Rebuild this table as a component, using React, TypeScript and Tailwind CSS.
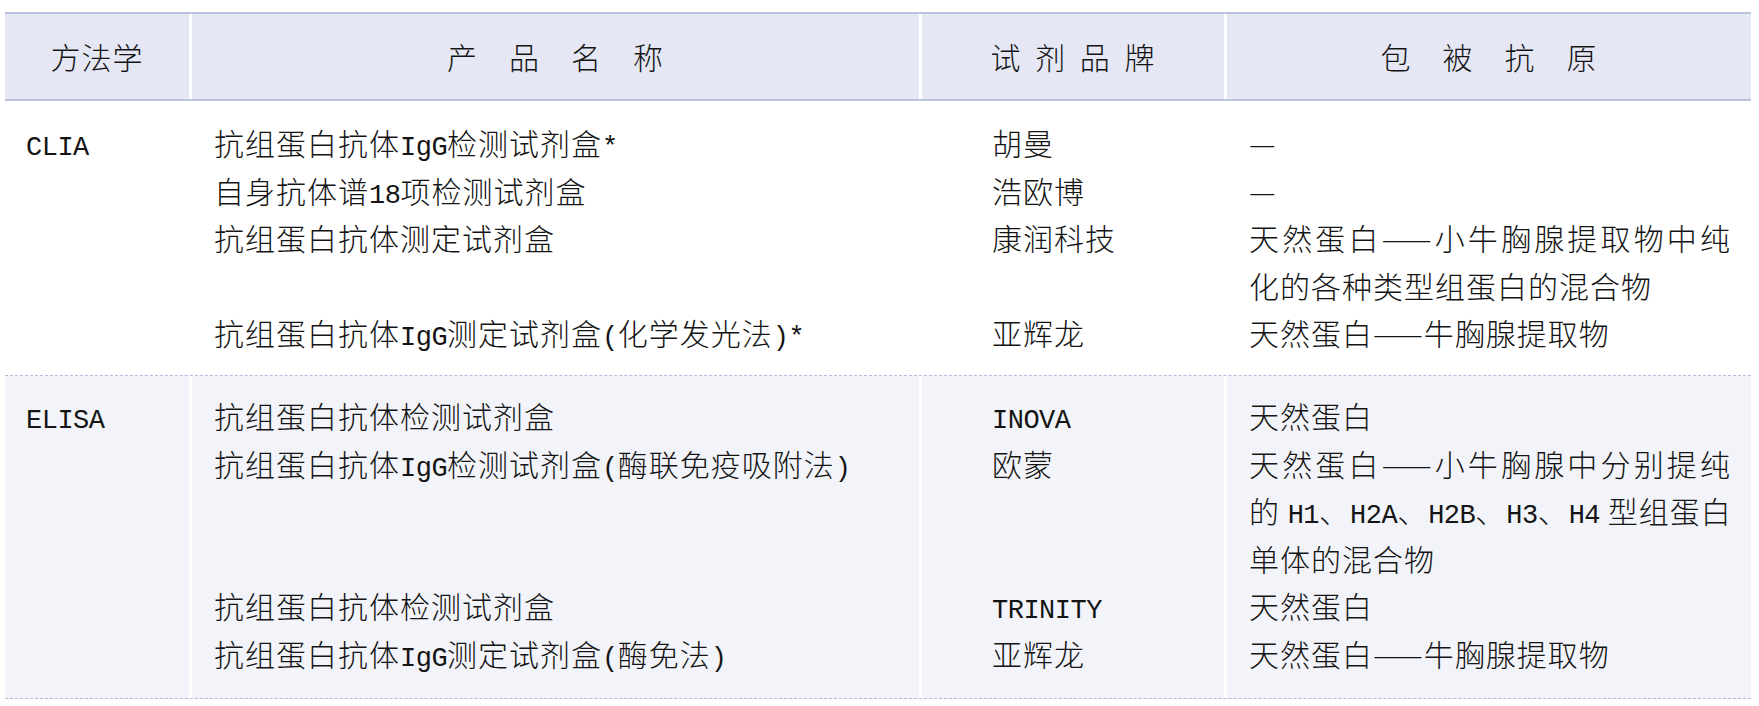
import React from 'react';

type Row = { name: string; brand: string; antigen: string[] };

const clia: Row[] = [
  { name: '抗组蛋白抗体IgG检测试剂盒*', brand: '胡曼', antigen: ['—'] },
  { name: '自身抗体谱18项检测试剂盒', brand: '浩欧博', antigen: ['—'] },
  { name: '抗组蛋白抗体测定试剂盒', brand: '康润科技', antigen: ['天然蛋白——小牛胸腺提取物中纯', '化的各种类型组蛋白的混合物'] },
  { name: '抗组蛋白抗体IgG测定试剂盒(化学发光法)*', brand: '亚辉龙', antigen: ['天然蛋白——牛胸腺提取物'] },
];

const elisa: Row[] = [
  { name: '抗组蛋白抗体检测试剂盒', brand: 'INOVA', antigen: ['天然蛋白'] },
  { name: '抗组蛋白抗体IgG检测试剂盒(酶联免疫吸附法)', brand: '欧蒙', antigen: ['天然蛋白——小牛胸腺中分别提纯', '的 H1、H2A、H2B、H3、H4 型组蛋白', '单体的混合物'] },
  { name: '抗组蛋白抗体检测试剂盒', brand: 'TRINITY', antigen: ['天然蛋白'] },
  { name: '抗组蛋白抗体IgG测定试剂盒(酶免法)', brand: '亚辉龙', antigen: ['天然蛋白——牛胸腺提取物'] },
];

// one printed line: fixed height so mixed faces don't push the rows apart
const Line = ({ text, justify }: { text: string; justify?: boolean }) => (
  <div className={`h-[47.6px] whitespace-nowrap ${justify ? 'text-justify [text-align-last:justify]' : ''}`}>
    {text.split(/([A-Za-z0-9()*]+)/).map((part, i) =>
      i % 2 === 1 ? (
        <span key={i} className="font-['Liberation_Mono',monospace] font-normal text-[27px] leading-none tracking-[-0.5px]">{part}</span>
      ) : (
        <span key={i}>{part}</span>
      )
    )}
  </div>
);

const Section = ({ method, rows, shaded }: { method: string; rows: Row[]; shaded?: boolean }) => {
  const sep = shaded ? 'border-l-[3px] border-white' : 'border-l-[3px] border-transparent';
  return (
    <div className={`grid grid-cols-[184px_730px_305px_527px] border-b border-dashed border-[#b4bbd8] ${shaded ? 'bg-[#f3f4fa]' : 'bg-white'}`}>
      <div className={`row-span-4 pl-[21px] ${shaded ? 'pt-[16px]' : 'pt-[18px]'}`}>
        <Line text={method} />
      </div>
      {rows.map((r, i) => {
        const top = i === 0 ? (shaded ? 'pt-[16px]' : 'pt-[18px]') : '';
        const bottom = i === rows.length - 1 ? (shaded ? 'pb-[20px]' : 'pb-[18px]') : '';
        const pad = `${top} ${bottom}`;
        return (
          <React.Fragment key={i}>
            <div className={`${sep} ${pad} pl-[22px]`}>
              <Line text={r.name} />
            </div>
            <div className={`${sep} ${pad} pl-[70px]`}>
              <Line text={r.brand} />
            </div>
            <div className={`${sep} ${pad} pl-[22px] pr-[20px]`}>
              {r.antigen.map((line, j) => (
                <Line key={j} text={line} justify={j < r.antigen.length - 1} />
              ))}
            </div>
          </React.Fragment>
        );
      })}
    </div>
  );
};

export default function App() {
  return (
    <div className="min-h-screen bg-white pt-[12px] pl-[5px] text-[#141414] font-['Noto_Sans_CJK_SC',sans-serif] font-light text-[30px] leading-[47.6px] tracking-[1px]">
      <div className="w-[1746px]">
        <div className="grid h-[89px] grid-cols-[184px_730px_305px_527px] border-y-2 border-[#bcc3de] bg-[#e5e8f4] text-center">
          <div className="flex items-center justify-center">方法学</div>
          <div className="flex items-center justify-center border-l-[3px] border-white">产　品　名　称</div>
          <div className="flex items-center justify-center border-l-[3px] border-white [word-spacing:6px]">试 剂 品 牌</div>
          <div className="flex items-center justify-center border-l-[3px] border-white">包　被　抗　原</div>
        </div>
        <Section method="CLIA" rows={clia} />
        <Section method="ELISA" rows={elisa} shaded />
      </div>
    </div>
  );
}
